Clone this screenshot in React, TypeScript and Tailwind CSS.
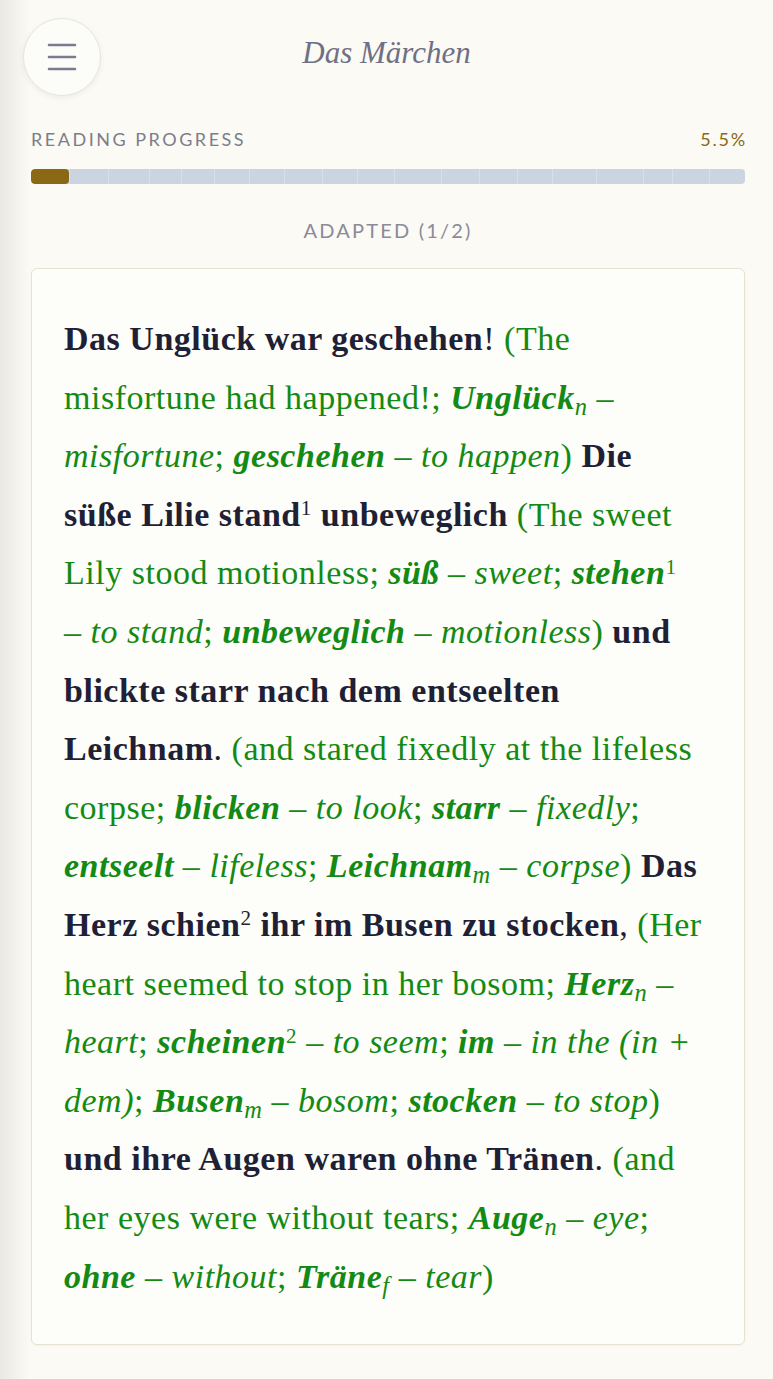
import type { ReactNode } from "react";

const serif = "font-['Liberation_Serif',serif]";
const sans = "font-['Lato','Open_Sans',sans-serif]";

// widths of the chapter segments in the progress bar
const segments = [39, 39, 41, 32, 33, 35, 34, 38, 35, 37, 47, 38, 38, 35, 44, 47, 29, 37, 36];

function B({ children }: { children: ReactNode }) {
  return <span className="font-bold text-[#1f1f35]">{children}</span>;
}

function D({ children }: { children: ReactNode }) {
  return <span className="text-[#1f1f35]">{children}</span>;
}

function W({ children }: { children: ReactNode }) {
  return <span className="font-bold italic">{children}</span>;
}

function I({ children }: { children: ReactNode }) {
  return <span className="italic">{children}</span>;
}

function Sub({ children }: { children: ReactNode }) {
  return <sub className="italic font-normal text-[0.72em]">{children}</sub>;
}

function Sup({ children }: { children: ReactNode }) {
  return <sup className="font-normal text-[0.62em]">{children}</sup>;
}

const lines: ReactNode[] = [
  <>
    <B>Das Unglück war geschehen</B>
    <D>!</D> (The
  </>,
  <>
    misfortune had happened!; <W>Unglück</W>
    <Sub>n</Sub> –
  </>,
  <>
    <I>misfortune</I>; <W>geschehen</W> – <I>to happen</I>) <B>Die</B>
  </>,
  <>
    <B>süße Lilie stand</B>
    <D>
      <Sup>1</Sup>
    </D>{" "}
    <B>unbeweglich</B> (The sweet
  </>,
  <>
    Lily stood motionless; <W>süß</W> – <I>sweet</I>; <W>stehen</W>
    <Sup>1</Sup>
  </>,
  <>
    – <I>to stand</I>; <W>unbeweglich</W> – <I>motionless</I>) <B>und</B>
  </>,
  <>
    <B>blickte starr nach dem entseelten</B>
  </>,
  <>
    <B>Leichnam</B>
    <D>.</D> (and stared fixedly at the lifeless
  </>,
  <>
    corpse; <W>blicken</W> – <I>to look</I>; <W>starr</W> – <I>fixedly</I>;
  </>,
  <>
    <W>entseelt</W> – <I>lifeless</I>; <W>Leichnam</W>
    <Sub>m</Sub> – <I>corpse</I>) <B>Das</B>
  </>,
  <>
    <B>Herz schien</B>
    <D>
      <Sup>2</Sup>
    </D>{" "}
    <B>ihr im Busen zu stocken</B>
    <D>,</D> (Her
  </>,
  <>
    heart seemed to stop in her bosom; <W>Herz</W>
    <Sub>n</Sub> –
  </>,
  <>
    <I>heart</I>; <W>scheinen</W>
    <Sup>2</Sup> – <I>to seem</I>; <W>im</W> – <I>in the (in +</I>
  </>,
  <>
    <I>dem)</I>; <W>Busen</W>
    <Sub>m</Sub> – <I>bosom</I>; <W>stocken</W> – <I>to stop</I>)
  </>,
  <>
    <B>und ihre Augen waren ohne Tränen</B>
    <D>.</D> (and
  </>,
  <>
    her eyes were without tears; <W>Auge</W>
    <Sub>n</Sub> – <I>eye</I>;
  </>,
  <>
    <W>ohne</W> – <I>without</I>; <W>Träne</W>
    <Sub>f</Sub> – <I>tear</I>)
  </>,
];

export default function App() {
  return (
    <div className="relative min-h-screen bg-[#fbfaf4] pb-[34px]">
      {/* drawer edge shadow */}
      <div className="pointer-events-none absolute inset-y-0 left-0 w-[30px] bg-linear-to-r from-[#e9e8e2] to-transparent" />

      <header className="relative grid grid-cols-[78px_1fr_78px] items-center px-[23px] pt-[18px]">
        <button className="flex h-[78px] w-[78px] items-center justify-center rounded-full border border-[#e6e5e1] bg-[#fcfcf8] shadow-[0_2px_6px_rgba(0,0,0,0.06)]">
          <svg className="h-[30px] w-[30px]" viewBox="0 0 30 30" fill="none" stroke="#7b7a8e" strokeWidth={2.6} strokeLinecap="round">
            <path d="M2 3h26M2 15h26M2 27h26" />
          </svg>
        </button>
        <h1 className={`${serif} mb-[8px] text-center text-[31px] italic font-normal text-[#707084]`}>Das Märchen</h1>
        <div />
      </header>

      <section className="relative pl-[31px] pr-[28px]">
        <div className={`${sans} mt-[31px] flex h-[24px] items-center justify-between text-[18px] tracking-[0.14em]`}>
          <span className="text-[#7c7d8c]">READING PROGRESS</span>
          <span className="text-[#8b6914] tracking-[0.1em] mr-[-2px]">5.5%</span>
        </div>

        <div className="mt-[18px] flex h-[15px] overflow-hidden rounded-[4px] bg-[#cbd5e1]">
          {segments.map((w, i) => (
            <div
              key={i}
              style={{ flexGrow: w }}
              className={`basis-0 ${i === 0 ? "rounded-[4px] bg-[#8b6914]" : "border-l border-[#d8dfe8]"}`}
            />
          ))}
        </div>

        <div className={`${sans} mt-[34px] flex h-[24px] items-center justify-center text-[20px] tracking-[0.11em] text-[#8a8a98]`}>
          ADAPTED (1/2)
        </div>

        <article className="mt-[26px] rounded-[6px] border border-[#e8e2d2] bg-[#fdfdf9] px-[32px] pt-[41px] pb-[38px] shadow-[0_1px_3px_rgba(0,0,0,0.04)]">
          <div className={`${serif} text-[34px] tracking-[0.015em] leading-[58.6px] text-[#138a13]`}>
            {lines.map((line, i) => (
              <div key={i} className="whitespace-nowrap">
                {line}
              </div>
            ))}
          </div>
        </article>
      </section>
    </div>
  );
}
